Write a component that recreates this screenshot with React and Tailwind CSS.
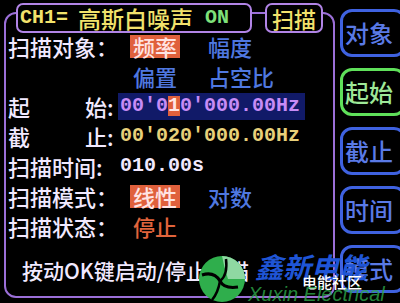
const mono = "font-['Liberation_Mono',monospace] font-bold";

function Row({ children, className = "" }) {
  return <div className={`flex h-[30px] items-center ${className}`}>{children}</div>;
}

function SideButton({ label, active }) {
  return (
    <div
      className={`flex h-[48px] w-[66px] shrink-0 items-center rounded-[12px] border-[3px] pl-[2px] text-[24px] leading-none ${
        active ? "border-[#5fe05a] text-[#9ee898]" : "border-[#3f62e0] text-[#5a7ae6]"
      }`}
    >
      {label}
    </div>
  );
}

function Logo() {
  return (
    <svg width="48" height="50" viewBox="0 0 48 50">
      <circle cx="24" cy="26" r="23" fill="#2fae4c" />
      <path d="M24 3 A23 23 0 0 1 47 26 L30 26 Q26 14 24 3 Z" fill="#8fd8a2" />
      <path d="M4 22 Q16 18 22 28 Q26 36 40 34" stroke="#000" strokeWidth="3" fill="none" />
      <path d="M22 28 Q20 40 14 47" stroke="#000" strokeWidth="2.5" fill="none" />
      <path d="M22 28 Q30 22 28 6" stroke="#000" strokeWidth="2.5" fill="none" />
    </svg>
  );
}

export default function App() {
  return (
    <div className="relative flex h-[303px] w-[400px] overflow-hidden bg-black font-['Noto_Sans_CJK_SC',sans-serif] font-medium text-[#f1e9ff]">
      {/* main panel */}
      <div className="ml-[4px] mt-[12px] h-[286px] w-[331px] shrink-0 rounded-[12px] border-2 border-[#9b6fd8]">
        <div className="-mt-[11px] ml-[10px] flex items-center">
          <div className="flex h-[30px] w-[236px] items-center rounded-[7px] border-2 border-[#b184e6] bg-black pl-[2px] leading-none">
            <span className={`${mono} text-[20px] text-[#f2e26c]`}>CH1=</span>
            <span className="ml-[10px] text-[23px] text-[#f2e26c]">高斯白噪声</span>
            <span className={`${mono} ml-[12px] text-[20px] text-[#7ee07a]`}>ON</span>
          </div>
          <div className="ml-[13px] flex h-[30px] w-[58px] items-center justify-center rounded-[7px] border-2 border-[#b184e6] bg-black text-[22px] leading-none text-[#f2e26c]">
            扫描
          </div>
        </div>

        <div className="-mt-[2px] pl-[2px] text-[22px] leading-none">
          <Row>
            <span className="w-[122px]">扫描对象：</span>
            <span className="w-[78px]">
              <span className="inline-flex h-[23px] w-[50px] items-center bg-[#e0603c] pl-[3px] text-[#ffe4e4]">频率</span>
            </span>
            <span className="text-[#4f78e0]">幅度</span>
          </Row>
          <Row>
            <span className="w-[125px]" />
            <span className="w-[75px] text-[#4f78e0]">偏置</span>
            <span className="text-[#4f78e0]">占空比</span>
          </Row>
          <Row>
            <span className="flex w-[110px]">
              <span>起</span>
              <span className="ml-[55px]">始</span>
              <span>:</span>
            </span>
            <span className={`${mono} flex h-[27px] w-[187px] items-center bg-[#111a68] pl-[2px] text-[20px] text-[#c78cf6]`}>
              00'0<span className="bg-[#e0603c] text-[#ffe4e4]">1</span>0'000.00Hz
            </span>
          </Row>
          <Row>
            <span className="flex w-[112px]">
              <span>截</span>
              <span className="ml-[55px]">止</span>
              <span>:</span>
            </span>
            <span className={`${mono} text-[20px] text-[#e8d07a]`}>00'020'000.00Hz</span>
          </Row>
          <Row>
            <span className="w-[112px]">扫描时间:</span>
            <span className={`${mono} text-[20px]`}>010.00s</span>
          </Row>
          <Row>
            <span className="w-[122px]">扫描模式：</span>
            <span className="w-[78px]">
              <span className="inline-flex h-[23px] w-[50px] items-center bg-[#e0603c] pl-[3px] text-[#ffe4e4]">线性</span>
            </span>
            <span className="text-[#4f78e0]">对数</span>
          </Row>
          <Row>
            <span className="w-[125px]">扫描状态：</span>
            <span className="text-[#e0643c]">停止</span>
          </Row>
        </div>

        <p className="mt-[17px] pl-[16px] text-[21px] leading-[24px]">按动OK键启动/停止扫描</p>
      </div>

      {/* side buttons */}
      <div className="ml-[5px] mt-[9px] flex flex-col gap-[11px]">
        <SideButton label="对象" />
        <SideButton label="起始" active />
        <SideButton label="截止" />
        <SideButton label="时间" />
        <SideButton label="模式" />
      </div>

      {/* watermark */}
      <div className="pointer-events-none absolute left-[198px] top-[253px]">
        <Logo />
      </div>
      <div className="pointer-events-none absolute left-[255px] top-[252px] text-[28px] font-bold italic leading-none text-[#1f55d6]">
        鑫新电能
      </div>
      <div className="pointer-events-none absolute left-[302px] top-[274px] text-[15px] leading-none text-white">
        电能社区
      </div>
      <div className="pointer-events-none absolute left-[248px] top-[284px] font-['Liberation_Sans',sans-serif] text-[20px] font-normal italic leading-none text-[#2ea84a]/80">
        Xuxin Electrical
      </div>
    </div>
  );
}
